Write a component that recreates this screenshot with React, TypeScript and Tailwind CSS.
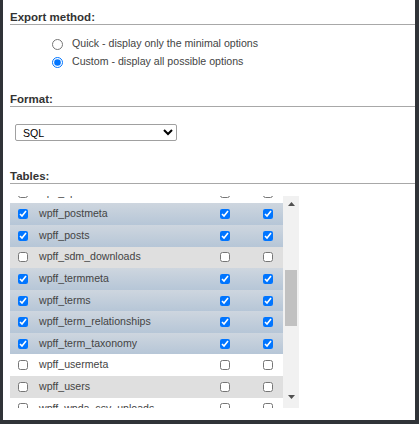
import { useLayoutEffect, useRef } from 'react';

const FONT = { fontFamily: '"Liberation Sans", Arial, sans-serif' };

const before = [
  'wpff_actionscheduler_actions',
  'wpff_actionscheduler_claims',
  'wpff_actionscheduler_groups',
  'wpff_actionscheduler_logs',
  'wpff_commentmeta',
  'wpff_comments',
  'wpff_e_events',
  'wpff_links',
  'wpff_ms_snippets',
  'wpff_options',
];

const visible: [string, boolean][] = [
  ['wpff_postmeta', true],
  ['wpff_posts', true],
  ['wpff_sdm_downloads', false],
  ['wpff_termmeta', true],
  ['wpff_terms', true],
  ['wpff_term_relationships', true],
  ['wpff_term_taxonomy', true],
  ['wpff_usermeta', false],
  ['wpff_users', false],
];

const after = [
  'wpff_wpda_csv_uploads',
  'wpff_wpda_logging',
  'wpff_wpda_menus',
  'wpff_wpda_project',
  'wpff_wpda_project_page',
  'wpff_wpda_project_table',
  'wpff_wpda_publisher',
  'wpff_wpda_table_design',
  'wpff_wpda_table_settings',
  'wpff_wpforms_tasks_meta',
  'wpff_wpr_rucss_used_css',
];

const tables: { name: string; marked: boolean }[] = [
  ...before.map((name) => ({ name, marked: false })),
  ...visible.map(([name, marked]) => ({ name, marked })),
  ...after.map((name) => ({ name, marked: false })),
];

function Heading({ children }: { children: string }) {
  return (
    <h3 className="text-[11.5px] leading-[13px] font-bold text-[#333] border-b border-[#a8a8a8]">
      {children}
    </h3>
  );
}

function Box({ checked }: { checked: boolean }) {
  return <input type="checkbox" checked={checked} readOnly className="w-[10px] h-[10px] m-0 shrink-0" />;
}

function Arrow({ down }: { down?: boolean }) {
  return (
    <svg width="7" height="4" viewBox="0 0 7 4" className="block">
      <polygon points={down ? '0,0 7,0 3.5,4' : '0,4 7,4 3.5,0'} fill="#505050" />
    </svg>
  );
}

export default function App() {
  const listRef = useRef<HTMLDivElement>(null);

  useLayoutEffect(() => {
    if (listRef.current) listRef.current.scrollTop = 209;
  }, []);

  return (
    <div className="w-[419px] h-[424px] bg-[#303338] pl-[3px]" style={FONT}>
      <div className="w-[412px] h-[420px] bg-white pt-[11px] pl-[7px] text-[10.6px] text-[#444]">
        <Heading>Export method:</Heading>
        <div className="mt-[10px] ml-[42px]">
          <label className="flex items-center h-[18px] gap-[9px]">
            <input type="radio" name="method" readOnly className="w-[11px] h-[11px] m-0" />
            <span>Quick - display only the minimal options</span>
          </label>
          <label className="flex items-center h-[18px] gap-[9px]">
            <input type="radio" name="method" checked readOnly className="w-[11px] h-[11px] m-0" />
            <span>Custom - display all possible options</span>
          </label>
        </div>

        <div className="mt-[22px]">
          <Heading>Format:</Heading>
        </div>
        <select
          defaultValue="sql"
          className="mt-[17px] ml-[5px] w-[162px] h-[17px] border border-[#a0a0a0] rounded-[2px] bg-white text-[10.6px] text-black pl-[3px]"
          style={FONT}
        >
          <option value="sql">SQL</option>
        </select>

        <div className="mt-[29px]">
          <Heading>Tables:</Heading>
        </div>
        <div className="mt-[12px] flex w-[289px] h-[212px]">
          <div ref={listRef} className="w-[273px] h-full overflow-hidden">
            {tables.map((t, i) => (
              <div
                key={t.name}
                className={
                  'flex items-center h-[21.6px] ' +
                  (t.marked
                    ? 'bg-gradient-to-b from-[#ced6df] to-[#b6c6d7]'
                    : i % 2 === 1
                    ? 'bg-white'
                    : 'bg-[#dfdfdf]')
                }
              >
                <span className="ml-[8px] flex">
                  <Box checked={t.marked} />
                </span>
                <span className="ml-[11px] flex-1 whitespace-nowrap">{t.name}</span>
                <Box checked={t.marked} />
                <span className="ml-[33px] mr-[10px] flex">
                  <Box checked={t.marked} />
                </span>
              </div>
            ))}
          </div>
          <div className="w-[16px] h-full bg-[#f1f1f1] flex flex-col">
            <div className="h-[16px] flex justify-center pt-[6px]">
              <Arrow />
            </div>
            <div className="flex-1">
              <div className="mt-[58px] mx-[2px] h-[56px] bg-[#c1c1c1]" />
            </div>
            <div className="h-[16px] flex justify-center pt-[3px]">
              <Arrow down />
            </div>
          </div>
        </div>
      </div>
    </div>
  );
}
